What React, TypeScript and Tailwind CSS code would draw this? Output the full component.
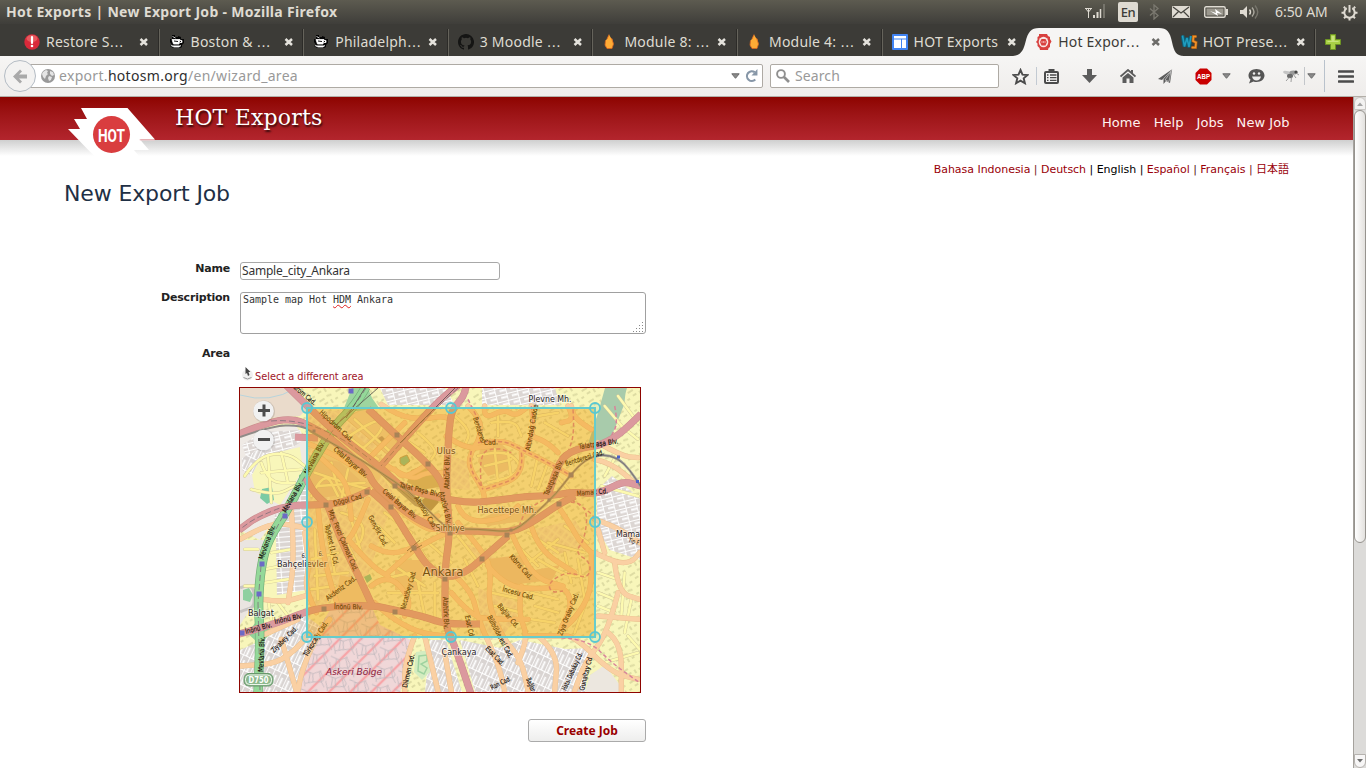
import React from "react";

const ui = "font-['Noto_Sans','Open_Sans',sans-serif]";
const dj = "font-['DejaVu_Sans','Noto_Sans_CJK_JP',sans-serif]";

/* ---------- window title bar ---------- */

function TitleBar() {
  return (
    <div className={`flex h-6 items-center bg-linear-to-b from-[#5d5b50] to-[#3f3e3a] text-[#dfdbd2] ${ui}`}>
      <div className="w-[1085px] pl-[6px] text-[14px] font-bold leading-6 tracking-[0.31px] whitespace-nowrap">
        Hot Exports | New Export Job - Mozilla Firefox
      </div>
      <svg width="20" height="16" viewBox="0 0 20 16" fill="none" stroke="#dfdbd2">
        <path d="M0 4.500h7M1 5l2.500 3L6 5M3.500 4v10" />
        <path d="M9 11v3M12.500 8v6" strokeWidth="2" />
        <path d="M15.500 5v9" strokeWidth="1.500" />
        <path d="M19 0v14" strokeWidth="2" stroke="#77756c" />
      </svg>
      <div className="ml-[13px] h-5 w-5 rounded-[2px] bg-[#dfdbd2] text-center text-[13px] font-medium leading-[20px] tracking-[-0.5px] text-[#3c3b37]">
        En
      </div>
      <svg className="ml-[11px]" width="10" height="16" viewBox="0 0 10 16" fill="none" stroke="#7b7970" strokeWidth="1.3">
        <path d="M1 4.500l8 7L5 15V1l4 3.500-8 7" />
      </svg>
      <svg className="ml-[13px]" width="18" height="12" viewBox="0 0 18 12">
        <rect width="18" height="12" rx="1" fill="#dfdbd2" />
        <path d="M1 1l8 6 8-6M1 11l5.500-5.500M17 11l-5.500-5.500" fill="none" stroke="#45443e" strokeWidth="1.200" />
      </svg>
      <svg className="ml-[14px]" width="24" height="12" viewBox="0 0 24 12">
        <rect x=".7" y=".7" width="20.500" height="10.600" rx="1.500" fill="none" stroke="#dfdbd2" strokeWidth="1.400" />
        <rect x="2.500" y="2.500" width="17" height="7" fill="#9b988e" />
        <path d="M22 3h2v6h-2z" fill="#dfdbd2" />
        <path d="M6 5l6 2-1-4 7 5-5-1 1 3z" fill="#fff" />
      </svg>
      <svg className="ml-[11px]" width="22" height="16" viewBox="0 0 22 16" fill="none" stroke="#dfdbd2" strokeWidth="1.400">
        <path d="M1 6h3l4-4v12l-4-4H1z" fill="#dfdbd2" stroke="none" />
        <path d="M10.500 5.500q2 2.500 0 5" />
        <path d="M13 3.500q4 4.500 0 9" stroke="#aaa79d" />
        <path d="M16 1.500q5.500 6.500 0 13" stroke="#77756c" />
      </svg>
      <div className="ml-[14px] w-[66px] text-[14px] leading-6 tracking-[-0.05px] whitespace-nowrap">6:50 AM</div>
      <svg className="shrink-0" width="17" height="17" viewBox="0 0 17 17" fill="none" stroke="#dfdbd2">
        <path d="M5.700 4.200a5.200 5.200 0 1 0 5.600 0" strokeWidth="2" />
        <path d="M8.500 1v7.500" strokeWidth="2" />
        <path d="M4.200 4.200L2.800 2.800M12.800 4.200l1.400-1.400M3 8.800H.5M14 8.800h2.500M4.500 12.700L3 14.200M12.500 12.700L14 14.200M8.500 14v2.500" strokeWidth="2" />
      </svg>
    </div>
  );
}

/* ---------- tabs ---------- */

const Alert = () => (
  <svg width="16" height="16" viewBox="0 0 16 16">
    <circle cx="8" cy="8" r="7.700" fill="#d9293a" />
    <ellipse cx="8" cy="4.500" rx="5.500" ry="3.500" fill="#ee7a76" opacity=".6" />
    <path d="M8 3v6" stroke="#fff" strokeWidth="2.200" strokeLinecap="round" />
    <circle cx="8" cy="12" r="1.300" fill="#fff" />
  </svg>
);
const Cup = () => (
  <svg width="16" height="16" viewBox="0 0 16 16">
    <path d="M3 1h3v2h3V2l3 1v2h3v4l-2 2v2l-2 1H4l-3-2 2-1-2-3V5h2z" fill="#050505" />
    <path d="M3.500 2.500l3 1.500M3 5.500h8l-1 4.500H4.500zM11 6.500h2v2h-2M2 11.500l3 1.500h5l2-1.500" fill="#fff" stroke="#fff" strokeWidth=".8" />
    <path d="M5 7l4 .5M11 7.500h1" stroke="#111" />
  </svg>
);
const Github = () => (
  <svg width="16" height="16" viewBox="0 0 16 16">
    <path
      fill="#151514"
      d="M8 0C3.580 0 0 3.580 0 8c0 3.540 2.290 6.530 5.470 7.590.4.070.55-.17.55-.38 0-.19-.01-.82-.01-1.490-2.010.37-2.530-.49-2.690-.94-.09-.23-.48-.94-.82-1.130-.28-.15-.68-.52-.01-.53.63-.01 1.080.58 1.230.82.72 1.210 1.870.87 2.330.66.07-.52.28-.87.51-1.070-1.780-.2-3.640-.89-3.640-3.950 0-.87.31-1.590.82-2.150-.08-.2-.36-1.020.08-2.120 0 0 .67-.21 2.200.82a7.600 7.600 0 0 1 4 0c1.530-1.040 2.200-.82 2.200-.82.44 1.100.16 1.920.08 2.120.51.56.82 1.270.82 2.150 0 3.070-1.870 3.750-3.650 3.950.29.25.54.73.54 1.480 0 1.070-.01 1.930-.01 2.200 0 .21.15.46.55.38A8 8 0 0 0 8 0z"
    />
  </svg>
);
const Flame = () => (
  <svg width="16" height="16" viewBox="0 0 16 16">
    <path d="M7 .5L9 4l1.500 1.500L11.500 10 10 14.500H5L3 11.500l.5-5L5 5z" fill="#ffab35" />
    <path d="M7 .5L5 5M3.500 6.500L3 11l2 3.500h5l1.500-4.500L9.500 4" fill="none" stroke="#d9661f" strokeWidth=".8" />
  </svg>
);
const Site = () => (
  <svg width="16" height="16" viewBox="0 0 16 16">
    <rect width="16" height="16" rx="1" fill="#4184f3" />
    <path d="M2 2h12v2.500H2zM2 5.500h7V14H2zM10 5.500h4V14h-4z" fill="#fff" />
  </svg>
);
const HotIcon = () => (
  <svg width="16" height="16" viewBox="0 0 16 16">
    <path d="M3 0H11l1 2 2 1v2l1.500 2.500L14 10v3l-1.500 1-.5 2H4l-.5-2L1.500 12V9.500L0 8l1.500-2V3L3 2z" fill="#d8403f" />
    <ellipse cx="7.500" cy="8" rx="4.800" ry="5.300" fill="#f8e5e3" />
    <path d="M5.500 5h4l1.500 3-1.500 3.500h-4L4 8z" fill="#d8403f" />
    <path d="M6 7v2M7.500 7v2M9 7v2" stroke="#f8c9c6" strokeWidth=".7" />
  </svg>
);
const Ws = () => (
  <svg width="17" height="16" viewBox="0 0 17 16" fill="none">
    <path d="M1.500 1.500l2 11L6 4l2 9 2-11" stroke="#0e5f77" strokeWidth="3.800" />
    <path d="M1.500 1.500l2 11L6 4l2 9 2-11" stroke="#1f9dbf" strokeWidth="1.600" />
    <path d="M15.500 2.500H12.500L12 7l3 1.500-.5 5h-4" stroke="#a35d14" strokeWidth="3" />
    <path d="M15.500 2.500H12.500L12 7l3 1.500-.5 5h-4" stroke="#f3922b" strokeWidth="1.600" />
  </svg>
);

const tabs: { icon: React.FC; label: string; active?: boolean; line?: boolean }[] = [
  { icon: Alert, label: "Restore S…", line: true },
  { icon: Cup, label: "Boston & …", line: true },
  { icon: Cup, label: "Philadelph…", line: true },
  { icon: Github, label: "3 Moodle …", line: true },
  { icon: Flame, label: "Module 8: …", line: true },
  { icon: Flame, label: "Module 4: …", line: true },
  { icon: Site, label: "HOT Exports" },
  { icon: HotIcon, label: "Hot Expor…", active: true },
  { icon: Ws, label: "HOT Prese…", line: true },
];

function TabStrip() {
  return (
    <div className={`flex h-8 bg-[#3c3b37] pl-[15px] ${ui}`}>
      {tabs.map((t, i) => (
        <div key={i} className="relative flex w-[144.6px] shrink-0 items-center pt-[3px]">
          {t.active && (
            <svg className="absolute -left-[14px] top-[4px]" width="172" height="28" viewBox="0 0 172 28">
              <path d="M0 28C8 27.500 10.500 22 12.500 14C15 4 18 0 26 0H146C154 0 157 4 159 14C161 23 163 28 171 28z" fill="#f6f5f4" />
            </svg>
          )}
          <div className="relative flex w-[31px] justify-start pl-[9px]"><t.icon /></div>
          <div className={`relative w-[92px] text-[14px] leading-5 tracking-[0.22px] whitespace-nowrap ${t.active ? "text-[#3c3b37]" : "text-[#dfdbd2]"}`}>
            {t.label.replace("…", "")}
            {t.label.endsWith("…") && <span className="font-['DejaVu_Sans']">…</span>}
          </div>
          <svg className="relative ml-[1px]" width="10" height="8" viewBox="0 0 10 8">
            <path d="M1.500 1l6.500 6M8 1l-6.500 6" stroke={t.active ? "#6d6c69" : "#e4e2dc"} strokeWidth="2.500" />
          </svg>
          {t.line && <div className="absolute right-0 top-[5px] h-[27px] w-[2px] border-l border-[#2c2b28] bg-[#65635b]" />}
        </div>
      ))}
      <svg className="mt-[10px] ml-[9px]" width="16" height="16" viewBox="0 0 16 16">
        <path d="M5.500.5h5v5h5v5h-5v5h-5v-5h-5v-5h5z" fill="#a9d046" stroke="#6d9422" />
        <path d="M6.500 2h3v5h4v1h-11V7h4z" fill="#c9e47c" />
      </svg>
    </div>
  );
}

/* ---------- navigation toolbar ---------- */

const Caret = () => (
  <svg width="9" height="6" viewBox="0 0 9 6"><path d="M.8.8h7.400L4.500 5.300z" fill="#8a8a8a" stroke="#6a6a6a" /></svg>
);

function Cell({ w, children }: { w: string; children?: React.ReactNode }) {
  return <div className={`flex h-6 shrink-0 items-center justify-center ${w}`}>{children}</div>;
}

function Toolbar() {
  return (
    <div className={`flex h-[41px] items-center border-b border-[#b3afa8] bg-linear-to-b from-[#f6f5f4] to-[#efedeb] ${ui}`}>
      <div className="relative z-10 ml-[4px] flex h-8 w-8 shrink-0 items-center justify-center rounded-full border border-[#b4bcc4] bg-[#f3f2f1]">
        <svg width="14" height="15" viewBox="0 0 14 15"><path d="M0 7.500L7 .5l2 2L6 5.500h8v4H6l3 3-2 2z" fill="#a9a9a9" /></svg>
      </div>
      <div className="-ml-[6px] flex h-6 w-[733px] shrink-0 items-center rounded-r-[2px] border border-[#aeaaa4] bg-white pl-[10px]">
        <svg width="14" height="14" viewBox="0 0 14 14">
          <circle cx="7" cy="7" r="7" fill="#999" />
          <path d="M2 3l3-2 2 1-1 2 1 1-2 2-1 3-2-2-1-3zM9 2l3 1 1 3-2 1-2-2zM8 7l3 1-1 3-2 1-1-3z" fill="#e4e4e4" />
        </svg>
        <div className="ml-[4px] w-[672px] text-[14px] leading-5 tracking-[0.31px] whitespace-nowrap text-[#999]">
          export.<span className="text-[#2e2e2e]">hotosm.org</span>/en/wizard_area
        </div>
        <Caret />
        <svg className="ml-[5px]" width="13" height="14" viewBox="0 0 12 13">
          <path d="M9.500 9.800A4.500 4.500 0 1 1 9 3" fill="none" stroke="#8797a8" strokeWidth="2" />
          <path d="M11.500 0v6H6z" fill="#8797a8" />
        </svg>
      </div>
      <div className="ml-[7px] flex h-6 w-[229px] shrink-0 items-center rounded-[2px] border border-[#aeaaa4] bg-white pl-[5px]">
        <svg width="14" height="14" viewBox="0 0 14 14" fill="none" stroke="#8f8f8f"><circle cx="5" cy="5" r="3.900" strokeWidth="1.900" /><path d="M8 8l5 5" strokeWidth="2.600" /></svg>
        <div className="ml-[5px] text-[14px] leading-5 tracking-[0.1px] text-[#999]">Search</div>
      </div>
      <Cell w="w-[43px]">
        <svg width="17" height="17" viewBox="0 0 17 17"><path d="M8.500 2l2 4.600 5 .5-3.800 3.200 1.200 4.900-4.400-2.600-4.400 2.600 1.200-4.900L1.500 7.100l5-.5z" fill="none" stroke="#4b4b4b" strokeWidth="1.900" /></svg>
      </Cell>
      <div className="-ml-[6px] mr-[5px] h-[18px] w-px shrink-0 bg-[#c3cad2]" />
      <Cell w="w-[19px]">
        <svg width="15" height="15" viewBox="0 0 15 15">
          <rect x="1" y="3" width="13" height="11" rx="1" fill="#f3f2f1" stroke="#4b4b4b" strokeWidth="2" />
          <path d="M4.500 0h6v4h-6z" fill="#4b4b4b" />
          <path d="M3 6h1.500M6 6h6.500M3 8.700h1.500M6 8.700h6.500M3 11.400h1.500M6 11.400h6.500" stroke="#4b4b4b" strokeWidth="1.300" />
        </svg>
      </Cell>
      <Cell w="w-[57px]"><svg width="15" height="14" viewBox="0 0 15 14"><path d="M5 0h5v6h5l-7.500 8L0 6h5z" fill="#5c5c5c" /></svg></Cell>
      <Cell w="w-[19px]">
        <svg width="16" height="14" viewBox="0 0 16 14"><path d="M.5 7.500L8 1l7.500 6.500" fill="none" stroke="#5c5c5c" strokeWidth="1.800" /><path d="M11 1h2v4h-2zM2.500 8.500L8 4l5.500 4.500V14H9.500V9.500h-3V14h-4z" fill="#5c5c5c" /></svg>
      </Cell>
      <Cell w="w-[57px]">
        <svg width="15" height="15" viewBox="0 0 15 15"><path d="M14.500 0L0 10l4 1zM14 1L5.500 10v5l2.500-3 4 2z" fill="#5c5c5c" /><path d="M13 2.500l-6 8.500 4 1.500z" fill="none" stroke="#ddd" strokeWidth=".6" /></svg>
      </Cell>
      <Cell w="w-[19px]">
        <svg width="17" height="17" viewBox="0 0 17 17"><path d="M5 .5h7l4.500 4.500v7L12 16.500H5L.5 12V5z" fill="#c90000" /><text x="2" y="11.300" fontSize="7.500" fontWeight="700" fill="#fff" fontFamily="Liberation Sans" textLength="13" lengthAdjust="spacingAndGlyphs">ABP</text></svg>
      </Cell>
      <Cell w="w-[27px]"><Caret /></Cell>
      <Cell w="w-[33px]">
        <svg width="17" height="15" viewBox="0 0 17 15"><path d="M8.500 0C13 0 16.500 2.800 16.500 6.500S13 13 8.500 13c-1 0-2-.1-3-.5L1 14.500l1.500-4C1 9.500.5 8 .5 6.500.5 2.800 4 0 8.500 0z" fill="#555" /><path d="M4 7.500h9q-1 4-4.500 4T4 7.500z" fill="#eee" /><circle cx="6" cy="4.500" r="1.200" fill="#eee" /><circle cx="11" cy="4.500" r="1.200" fill="#eee" /></svg>
      </Cell>
      <Cell w="w-[37px]">
        <svg width="17" height="14" viewBox="0 0 17 14"><ellipse cx="5" cy="4" rx="5" ry="1.700" fill="#c4c4c4" transform="rotate(15 5 4)" /><ellipse cx="10.500" cy="3.500" rx="4" ry="2" fill="#999" /><ellipse cx="7" cy="7" rx="3" ry="2.200" fill="#6a6a6a" /><circle cx="13" cy="3" r="1.600" fill="#444" /><path d="M3 12l3.500-4M8 13l.5-5M13 9l-3-4M16 6l-3-2" stroke="#888" strokeWidth=".8" /></svg>
      </Cell>
      <div className="-ml-[6px] h-[18px] w-px shrink-0 bg-[#c3c6ca]" />
      <Cell w="w-[13px]"><Caret /></Cell>
      <div className="ml-[6px] h-8 w-px shrink-0 bg-[#b9c2cc]" />
      <Cell w="w-[42px]"><svg width="16" height="13" viewBox="0 0 16 13"><path d="M1 1.500h14M1 6.500h14M1 11.500h14" stroke="#4b4b4b" strokeWidth="2.600" strokeLinecap="round" /></svg></Cell>
    </div>
  );
}

/* ---------- map ---------- */

/* Turns "x y x y ..." polylines (separated by M) into curves through the segment midpoints. */
function smooth(d: string): string {
  return d
    .split("M")
    .filter((s) => s.trim())
    .map((s) => {
      const n = (s.match(/-?\d+(\.\d+)?/g) || []).map(Number);
      let out = `M${n[0]} ${n[1]}`;
      for (let i = 2; i < n.length - 2; i += 2) {
        out += `Q${n[i]} ${n[i + 1]} ${(n[i] + n[i + 2]) / 2} ${(n[i + 1] + n[i + 3]) / 2}`;
      }
      return `${out}L${n[n.length - 2]} ${n[n.length - 1]}`;
    })
    .join("");
}

const trunk = ["M366 387L355 406 336 424 318 453 306 474 288 509 268 540 261 566 258 603 260 628 259 671 258 693"];
const primary = [
  "M285 384L310 409 341 437 371 460 388 474 400 486 420 493 440 498 470 503 500 500 528 496 551 496 572 492 598 494 618 484 626 482 641 486",
  "M239 434L271 421 295 419 310 426 328 436 345 451 368 471 373 484 395 503 415 519 443 531 478 531 508 533 530 524 559 504 575 496",
  "M460 384L443 396 412 430 381 466",
  "M368 409L397 436 428 464 443 483 445 500",
  "M466 387L464 397 452 409 449 429 448 450 446 486 450 533 446 560 445 578 445 625 453 641 471 694",
  "M371 490L348 501 326 505 288 505 258 516 239 530",
  "M306 478L312 491 326 504M328 506L341 541 361 581 372 605",
  "M371 491L391 508 402 526 415 547 427 566 445 578 465 573 483 558 508 536",
  "M239 634L275 624 305 612 325 607 371 605 395 610 425 617 445 624 480 624",
  "M548 496L555 472 565 454 585 447 598 446 618 436 641 414",
  "M295 437L318 438",
];
/* drawn in a three-times-enlarged coordinate space */
const secondary = [
  "M430 55L480 90 560 100 610 90 640 100M230 200L290 250 330 300 340 400M400 210L500 110M215 175L280 200 400 275",
  "M560 240L500 280 470 250M440 235L520 285 560 260 610 260",
  "M690 60L730 100 725 160 700 195 690 240 735 310 740 340",
  "M720 170L790 160 850 190 950 240 1000 270M850 200L860 270 740 310",
  "M880 60L890 130 865 190M990 60L1010 100 970 110M960 200L930 170 880 150",
  "M1060 130L1010 100 1000 60M1070 220L1120 230 1200 300M1080 170L1150 210 1200 215",
  "M740 60L735 100 800 70 830 90 860 70M625 150L680 190 760 180",
  "M750 540L800 600 900 610 975 600 1000 640 990 690 960 740 1010 700 1060 620 1060 500",
  "M660 410L740 500 760 560 750 650 790 750 850 820 870 915",
  "M640 560L700 610 720 700 780 830 800 915M640 620L700 690 760 700 870 700",
  "M820 440L850 510 900 580 975 600M960 360L1000 420 1020 460 1060 500M880 420L900 490 1010 560",
  "M850 600L840 680 870 750 840 830M900 750L960 800 950 915M870 750L960 750 1010 750 1120 860 1200 880",
  "M1070 500L1130 530 1180 530 1205 500M1070 400L1130 420 1205 470M1080 430L1100 500",
  "M1130 530L1140 620 1205 640M1140 620L1110 740 1040 830 1010 915M1110 740L1150 770 1150 915M1080 690L1205 700",
  "M530 490L600 450 640 440M450 560L530 490M400 600L450 560 520 640 500 690M400 480L450 510 540 480",
  "M275 700L230 760 190 860 180 915M215 740L150 830 6 840M130 760L175 915M70 750L180 700",
  "M200 440L215 540 200 600 235 680M240 360L250 480 280 600 300 660M330 460L400 540 450 570",
  "M410 650L450 690 540 740 620 750M530 750L500 830 500 915M560 750L600 915M620 800L640 915",
  "M75 640L130 650 200 630M160 370L170 520 150 650M6 460L60 430 120 410 200 425",
  "M390 340L350 440 320 470M480 370L560 430 600 430M560 400L600 390M660 360L680 410 800 400 840 360",
];
const minor = [
  "M20 270L60 210 150 200 200 240M70 230L90 290 170 290M40 310L110 330 170 300M90 210L100 350M130 200L150 290M70 260L190 250",
  "M230 260L350 300 400 310M220 330L260 250 300 330M280 230L300 330 360 330M330 250L310 340M240 300L380 290",
  "M320 160L420 90 440 130 360 200M350 100L460 200M300 130L420 220M540 140L600 190 580 220M500 160L560 200",
  "M310 380L380 400 370 480 320 470M290 400L350 520M330 370L370 500M420 420L470 470M440 380L520 440",
  "M230 430L240 640M265 420L290 560M220 520L300 500M230 570L330 560M220 610L290 600",
  "M720 210L790 190 850 230 830 270 750 290M740 240L820 220M770 190L780 290M810 200L820 280M900 210L880 300M930 230L900 310",
  "M650 90L700 130 680 180M760 110L830 100 850 150M780 150L780 90M900 90L960 80M920 110L990 150M940 250L1000 320",
  "M660 450L730 540M680 520L720 600M540 480L600 570M560 460L640 530M470 540L560 600M430 580L520 560M450 620L600 620M540 590L560 690M590 590L590 710",
  "M830 470L900 540M870 440L960 500M930 470L1040 500M900 520L980 570 1040 570M860 540L960 460M980 420L1050 470",
  "M760 620L850 640M770 660L850 680M880 620L960 640M890 660L960 680M880 700L950 710M980 500L1000 590M1020 520L1040 640M1040 660L1010 740",
  "M1090 300L1200 330M1100 270L1140 200M1100 60L1160 130M1150 120L1200 160M1140 30L1200 110",
  "M1080 560L1140 580M1080 620L1130 640M1160 560L1150 690M1180 640L1160 740M1080 660L1130 680M1170 750L1205 790M1100 830L1200 800",
  "M20 600L60 600M80 550L130 540M80 590L150 580M100 500L160 490M20 490L60 490M90 640L100 700M120 650L150 690",
];
const labels: [string, number, number, number, number][] = [
  ["Hipodrom Cad.", 319, 413, 43, 43],
  ["drom Cad.", 293, 388, 40, 27],
  ["Celal Bayar Blv.", 333, 450, 41, 43],
  ["Celal Bayar Blv.", 382, 492, 40, 43],
  ["Talat Paşa Blv.", 399, 487, 14, 42],
  ["Altınsoy Cad.", 414, 498, 58, 37],
  ["Dögol Cad.", 334, 506, -15, 31],
  ["Mevlana Blv.", 308, 475, -62, 36],
  ["Mevlana Blv.", 286, 513, -60, 34],
  ["Mevlana Blv.", 263, 560, -70, 36],
  ["Mevlana Blv.", 263, 672, -87, 35],
  ["Mrş. Fevzi Çakmak Cad.", 328, 511, 67, 66],
  ["Taşkent (1.) Cd.", 325, 525, 78, 42],
  ["Gençlik Cad.", 368, 517, 62, 34],
  ["Akdeniz Cad.", 328, 601, -37, 36],
  ["İnönü Blv.", 334, 609, 1, 29],
  ["İnönü Blv.", 275, 624, -12, 29],
  ["İnönü Blv.", 246, 634, -15, 27],
  ["Necatibey Cad.", 405, 610, -74, 40],
  ["Bentderesi", 473, 418, 72, 27],
  ["Cad.", 484, 445, -2, 14],
  ["Altındağ Cadde", 530, 451, -80, 47],
  ["Atatürk Blv.", 449, 489, -89, 34],
  ["Atatürk Blv.", 439, 492, 76, 34],
  ["Talatpaşa Blv.", 579, 449, -8, 40],
  ["Talatpaşa Blv.", 548, 496, -66, 38],
  ["Bentderesi Cad.", 566, 466, -17, 40],
  ["Mamak Cd.", 577, 496, -5, 31],
  ["Kıbrıs Cad.", 509, 557, 48, 31],
  ["İncesu Cad.", 502, 591, 16, 33],
  ["Bağlar Cd.", 497, 606, 50, 29],
  ["Bülbülderesi Cad.", 487, 617, 62, 47],
  ["Esat Cd.", 465, 616, 78, 23],
  ["Esat Cad.", 485, 649, 46, 24],
  ["Atatürk Blv.", 443, 597, 88, 32],
  ["Ziya Oralay Cad.", 562, 636, -68, 45],
  ["Türkocağı Cad.", 307, 657, -58, 40],
  ["Ziyabey Cad.", 274, 653, -45, 34],
  ["Dikmen Cad.", 407, 688, -77, 34],
  ["Hatai Dabakay Cd.", 566, 691, -66, 41],
  ["Gunaltay Cd", 584, 691, -76, 34],
  ["Bağlar", 526, 679, 68, 14],
  ["Ran Cad.", 492, 690, -27, 22],
];
const squares: [number, number][] = [[397, 435], [428, 464], [326, 505], [367, 492], [391, 507], [395, 486], [571, 475], [559, 504], [450, 533], [507, 535], [482, 559], [445, 579], [414, 548], [324, 609], [395, 612]];
const smallSquares: [number, number][] = [[314, 431], [549, 500], [511, 530]];
const blues: [number, number][] = [[351, 391], [285, 516], [262, 564], [259, 594], [242, 633]];
const handles: [number, number][] = [[307, 408], [451, 408], [595, 408], [307, 522], [595, 522], [307, 637], [451, 637], [595, 637]];
const towns: [string, number, number, number, number][] = [
  ["Plevne Mh.", 550, 402, 43, 8.5], ["Ulus", 446, 454, 19, 8.5], ["Hacettepe Mh.", 507, 513, 59, 8.5],
  ["Sıhhiye", 450, 530.5, 29, 8.5], ["Ankara", 443, 575.5, 41, 12], ["Bahçelievler", 302, 566.5, 50, 8.5],
  ["Balgat", 261, 615.5, 26, 8.5], ["Çankaya", 459, 655, 35, 8.5], ["Mama", 628, 536.5, 24, 8.5], ["6.", 304, 558, 5, 6.5], ["6.", 321, 556, 5, 6.5],
];
const rail = "M310 431L350 453 380 472 410 492 430 512 447 529 478 529 508 532 520 527 535 514 557 493 571 474 585 460 601 454 618 458 630 470 641 487";
const railWest = "M240 437L271 426 300 425 312 432 328 442";

function AreaMap() {
  return (
    <svg width="400" height="304" viewBox="240 388 400 304" className="block" fill="none" fontFamily="DejaVu Sans">
      <defs>
        <pattern id="blk" width="11" height="7" patternUnits="userSpaceOnUse" patternTransform="rotate(-14)">
          <rect width="11" height="7" fill="#dcd6d3" /><path d="M0 0h11M0 0v7M5 3.500h6" stroke="#fff" strokeWidth="1.900" />
        </pattern>
        <pattern id="blk2" width="7" height="14" patternUnits="userSpaceOnUse" patternTransform="rotate(25)">
          <rect width="7" height="14" fill="#d9d4d2" /><path d="M0 0h7M0 0v14M3.500 5v9" stroke="#fff" strokeWidth="1.800" />
        </pattern>
        <pattern id="blk3" width="12" height="5" patternUnits="userSpaceOnUse" patternTransform="rotate(-4)">
          <rect width="12" height="5" fill="#dbd5d2" /><path d="M0 0h12M0 0v5" stroke="#fff" strokeWidth="2.200" />
        </pattern>
        <pattern id="yel" width="19" height="13" patternUnits="userSpaceOnUse" patternTransform="rotate(-32)">
          <path d="M1 3h6M10 2l5 1M4 8h4M12 7v4M16 9h3" stroke="#dedca3" strokeWidth="2" />
        </pattern>
        <pattern id="dens" width="12" height="8" patternUnits="userSpaceOnUse" patternTransform="rotate(36)">
          <rect width="12" height="8" fill="#eedfb8" /><path d="M0 1h12M2 0v8M7 1v7" stroke="#f8efbc" strokeWidth="1.500" /><path d="M4 4h2M9 5h2" stroke="#dccdaa" />
        </pattern>
        <pattern id="mil" width="15" height="15" patternUnits="userSpaceOnUse" patternTransform="rotate(45)">
          <rect width="15" height="15" fill="#f0d7d8" /><path d="M2 0v15" stroke="#f7a5a8" strokeWidth="2.400" />
        </pattern>
        <pattern id="lots" width="23" height="19" patternUnits="userSpaceOnUse" patternTransform="rotate(12)">
          <path d="M0 3l9 2 2 8-8 3-3-7M11 13l8-2 4 5M9 5l7-4 5 7-2 4M3 16l1 3M16 1V0M6 4l1 11M19 11l-4-9" stroke="#bfb6bb" strokeWidth=".8" />
        </pattern>
      </defs>
      <path d="M240 388h400v304H240z" fill="#f8f6ba" />
      <path d="M240 388h400v304H240z" fill="url(#yel)" />
      <path d="M240 388H288L308 408 300 416 271 418 240 430z" fill="#eadbcb" />
      <path d="M240 395Q270 404 296 388" stroke="#b8d4dc" />
      <path d="M240 432L295 425 307 440 306 474 260 540 240 530z" fill="#efeae5" />
      <path d="M262 432L300 430 304 440 280 455 248 462 242 445z" fill="url(#blk)" />
      <path d="M242 458L262 448 272 462 250 475 242 470z" fill="url(#blk2)" />
      <path d="M275 515L306 485V605H275L268 555z" fill="url(#blk3)" />
      <path d="M277 595L306 590V605H264V600z" fill="#f8f6ba" />
      <path d="M260 542L276 538 277 600 262 602z" fill="#f8f6ba" />
      <path d="M240 540L266 540 256 600 240 625z" fill="#eae5e1" />
      <path d="M240 588c8-4 14-2 14 6v8c0 8-8 6-14 10" stroke="#c9c5c3" strokeWidth="3" />
      <path d="M243 590l6-2 4 7-3 7-7-2z" fill="#8fd0a0" />
      <path d="M262 640L305 615 325 630 302 692H240V650z" fill="url(#blk2)" />
      <path d="M262 456L300 447 303 470 280 505 255 492 252 475z" fill="#f8f6ba" />
      <path d="M308 412L350 410 390 440 370 460 395 495 368 575 325 605 307 605z" fill="url(#dens)" />
      <path d="M320 440L350 430 390 465 370 490 330 500z" fill="#eeddab" />
      <path d="M345 418L365 408 400 445 388 455z" fill="#efd9a8" stroke="#e3c795" />
      <path d="M378 438l4-2 4 4-4 4z" fill="#b39c7c" />
      <path d="M309 455L340 462 360 480 345 494 322 498 309 480z" fill="#e8cfa6" />
      <path d="M455 538L500 560 480 560zM478 588L525 605 500 640 480 640z" fill="url(#dens)" />
      <path d="M448 455L468 462 470 490 448 488zM530 530L575 520 590 545 555 555z" fill="url(#dens)" />
      <path d="M480 448L500 443 514 455 508 470 488 476 478 462zM500 510L545 506 530 520 488 526 478 520z" fill="#ecd2a4" />
      <path d="M480 560L520 555 535 570 560 565 552 580 510 585z" fill="#eccb9f" />
      <path d="M597 490L612 476 630 490 641 500V560L610 550 597 530z" fill="url(#blk)" />
      <path d="M380 388H445L455 405H388zM482 388H555L560 405H482z" fill="url(#blk)" />
      <path d="M430 640H446L462 692H425zM460 640L500 648 520 640 570 650 545 692H475z" fill="url(#blk2)" />
      <path d="M545 650L590 648 585 692H545z" fill="url(#blk2)" />
      <path d="M590 675L605 665 625 692H585z" fill="#ece7df" />
      <path d="M340 575L362 580 369 602 335 603zM395 560L425 560 420 590 395 590z" fill="#efd3a2" />
      <path d="M332 607L372 608 380 625 411 640 410 657 400 693H299L311 640z" fill="url(#mil)" />
      <path d="M332 607L372 608 380 625 411 640 410 657 400 693H299L311 640z" fill="url(#lots)" />
      <path d="M605 388H627C624 396 626 402 622 410L610 440 588 444 598 413z" fill="#a8cbab" />
      <path d="M262 489L272 487 274 500 267 504 260 498z" fill="#7bcba3" />
      <path d="M416 652L430 650V672L422 680 414 672z" fill="#d4ecc0" />
      <path d="M419 656l8-1v6l-6 3 6 4-3 6-6-3z" stroke="#9fd3a0" strokeWidth="1.500" />
      <path d="M400 458l7-3 3 6-6 5-4-3z" fill="#7fc794" stroke="#b5a467" />
      <path d="M411 470l14-5 12 8 2 14-18 3-14-8z" fill="#cdbb82" />
      <path d="M422 500l8-6 9 8-8 9-8-5z" fill="#a6976b" />
      <path d="M364 577l6-3 2 5-5 4z" fill="#7fc794" />
      <path d="M352 388H368L372 398 379 408 350 412 337 424 344 408z" fill="#9ed59f" />
      <path d="M299 475l6-2v14l-6-6z" fill="#7fc794" />
      <path d="M247 633L256 622 262 621 272 632 262 642 256 641z" fill="#92d39a" />

      <g transform="translate(238 386) scale(.33333)" strokeLinejoin="round" strokeLinecap="round">
        {minor.map((d, i) => <path key={i} d={smooth(d)} stroke="#cfc69b" strokeWidth="10" />)}
        {minor.map((d, i) => <path key={i} d={smooth(d)} stroke="#fdfab0" strokeWidth="7.500" />)}
        {secondary.map((d, i) => <path key={i} d={smooth(d)} stroke="#eabf8d" strokeWidth="16" />)}
        {secondary.map((d, i) => <path key={i} d={smooth(d)} stroke="#fad0a3" strokeWidth="13.500" />)}
        <path d={smooth("M720 170L790 160 850 190 950 240 1000 270M850 200L860 270 740 310M700 195L690 240 735 310M730 300L720 200 780 185 820 200M880 60L890 130 865 190M1005 70L1010 140 990 200M960 360L1000 340 1050 370 1040 460 1010 500 1060 530 1050 580 990 555 930 590 940 620 975 615M970 755L1050 760 1120 830 1205 890M1130 60L1140 110 1120 150M1000 340L1060 380 1070 400M840 440L850 380 920 340M690 40L720 100")} stroke="#d8849a" strokeWidth="4.500" strokeDasharray="12 8" strokeLinecap="butt" />
      </g>
      <path d="M368 462L385 470 410 492 428 510 415 506 395 488z" fill="#aaa084" />
      <path d="M372 466L415 502M378 468L420 503M384 472L424 506" stroke="#827b66" strokeWidth=".7" />
      {trunk.map((d, i) => <path key={i} d={smooth(d)} stroke="#70aa75" strokeWidth="9.400" />)}
      {trunk.map((d, i) => <path key={i} d={smooth(d)} stroke="#94d899" strokeWidth="8.200" />)}
      {primary.map((d, i) => <path key={i} d={smooth(d)} stroke="#c98c8e" strokeWidth="7.200" />)}
      {primary.map((d, i) => <path key={i} d={smooth(d)} stroke="#db999e" strokeWidth="6.200" />)}
      <path d={smooth(rail)} stroke="#a09c98" strokeWidth="2.400" />
      <path d={smooth(rail)} stroke="#6d6a68" strokeWidth=".8" />
      <path d={smooth(railWest)} stroke="#8f8b88" strokeWidth="2" />
      <path d="M617 455.500h3v3h-3zM636 480h3v3h-3z" fill="#4c62c8" />
      <path d={smooth("M366 388L355 406 336 424 306 474 270 540M271 421L295 419 341 437 371 460M288 505L258 516 239 530M458 388L412 430 381 466M258 603L260 690M261 566L258 603")} stroke="#7d6e78" strokeWidth=".8" strokeDasharray="6 3" />
      <path d="M365 388L346 418M378 388L337 424M455 388L400 443M407 551L420 540M410 552L422 545" stroke="#57514c" strokeWidth=".8" />
      {blues.map(([x, y], i) => <rect key={i} x={x - 2.5} y={y - 2.5} width="5" height="5" fill="#6d6ac6" />)}
      {squares.map(([x, y], i) => <rect key={i} x={x - 2.5} y={y - 2.5} width="5" height="5" fill="#7a7590" />)}
      {smallSquares.map(([x, y], i) => <rect key={i} x={x - 1.5} y={y - 1.5} width="3" height="3" fill="#7a7590" />)}
      {labels.map(([t, x, y, a, w], i) => (
        <text key={i} x={x} y={y} transform={`rotate(${a} ${x} ${y})`} fontSize="7" fill="#120c08" stroke="#120c08" strokeWidth=".15" textLength={w} lengthAdjust="spacingAndGlyphs">{t}</text>
      ))}
      {towns.map(([t, x, y, w, s], i) => (
        <text key={i} x={x - w / 2} y={y} fontSize={s} textLength={w} lengthAdjust="spacingAndGlyphs" fill="#28221e" stroke="#fff" strokeOpacity=".6" strokeWidth="1.600" paintOrder="stroke">{t}</text>
      ))}
      <text x="628" y="542" fontSize="6.500" fill="#222" transform="rotate(17 628 542)" textLength="11" lengthAdjust="spacingAndGlyphs">Tip F</text>
      <text x="326" y="674.500" fontSize="9" fontStyle="italic" fill="#8f1b3c" textLength="56" lengthAdjust="spacingAndGlyphs">Askeri Bölge</text>
      <rect x="244" y="673.500" width="29" height="12.500" rx="5" fill="#8db98d" stroke="#68976c" />
      <rect x="245.500" y="675" width="26" height="9.500" rx="4" stroke="#f0f7ee" />
      <text x="248.500" y="683" fontSize="8" fontWeight="700" fill="#fff" textLength="20" lengthAdjust="spacingAndGlyphs">D750</text>

      <path d="M307 408h288v229H307z" fill="#ee9900" fillOpacity=".4" stroke="#66cccc" strokeWidth="2" />
      {handles.map(([x, y], i) => <circle key={i} cx={x} cy={y} r="5" stroke="#58c8d2" strokeWidth="1.800" fill="#66cccc" fillOpacity=".15" />)}
      {[411, 440].map((y) => (
        <g key={y}>
          <circle cx="264" cy={y + 0.5} r="11" fill="#000" opacity=".12" />
          <circle cx="263.500" cy={y} r="10.300" fill="#f1f1f1" />
          <path d={y === 411 ? "M258 410.500h12M264 404.500v12" : "M258 439.500h12"} stroke="#4c4c4c" strokeWidth="3" />
        </g>
      ))}
    </svg>
  );
}

/* ---------- page ---------- */

function Header() {
  return (
    <div>
      <div className="flex h-[43px] items-start bg-linear-to-b from-[#8e0400] to-[#b3252d]">
        <svg className="relative z-10 ml-[66px] mt-[10px] shrink-0" width="92" height="50" viewBox="66 107 92 50">
          <path d="M81 108H127.500L155 139.500H140L149 150H134L140 157H95L68 129H80L74 119H87z" fill="#fff" />
          <path d="M139 139.500h15l1 1h-15z" fill="#f5ccd0" />
          <circle cx="111.500" cy="134.500" r="18.500" fill="#d93d3f" />
          <text x="98" y="141.500" fontFamily="Roboto" fontSize="19" fontWeight="700" fill="#fff" textLength="27" lengthAdjust="spacingAndGlyphs">HOT</text>
        </svg>
        <div className="ml-[17px] mt-[8px] w-[927px] font-['DejaVu_Serif',serif] text-[22px] leading-[26px] tracking-[0.2px] whitespace-nowrap text-white [text-shadow:1px_2px_2px_rgba(0,0,0,0.7)]">HOT Exports</div>
        <div className={`mt-[17px] flex gap-[13px] text-[13px] leading-[18px] tracking-[0.06px] whitespace-nowrap text-[#fff2f0] ${dj}`}>
          <span>Home</span><span>Help</span><span>Jobs</span><span>New Job</span>
        </div>
      </div>
      <div className="h-4 bg-linear-to-b from-[#cfcfcf] to-white" />
    </div>
  );
}

function Scrollbar() {
  return (
    <div className="flex w-[13px] shrink-0 flex-col border-l border-[#a5a29d] bg-[#dcdbd9]">
      <div className="flex h-[13px] items-center justify-center rounded-t-full border border-[#c9c7c4] bg-[#f3f2f1]">
        <svg width="6" height="4" viewBox="0 0 6 4"><path d="M0 4l3-3.500L6 4z" fill="#a4a4a4" /></svg>
      </div>
      <div className="h-[433px] rounded-full border border-[#96938e] bg-linear-to-r from-white to-[#e3e1de]" />
      <div className="flex-1" />
      <div className="flex h-[14px] items-center justify-center rounded-b-full border border-[#b5b2ae] bg-[#f7f6f6]">
        <svg width="6" height="4" viewBox="0 0 6 4"><path d="M0 0l3 3.500L6 0z" fill="#6e6e6e" /></svg>
      </div>
    </div>
  );
}

export default function App() {
  return (
    <div className="flex h-[768px] w-[1366px] flex-col overflow-hidden bg-white">
      <TitleBar />
      <TabStrip />
      <Toolbar />
      <div className="flex min-h-0 flex-1">
        <div className={`w-[1353px] shrink-0 ${dj}`}>
          <Header />
          <div className="flex h-[25px] justify-end pt-[6px] pr-[64px] text-[11px] leading-4 tracking-[-0.03px] whitespace-nowrap">
            <div className="text-[#990008]">
              Bahasa Indonesia <span className="text-[#722]">|</span> Deutsch <span className="text-black">| English |</span> Español <span className="text-[#522]">|</span> Français <span className="text-[#722]">|</span> 日本語
            </div>
          </div>
          <h1 className="ml-[64px] text-[22px] leading-[26px] tracking-[-0.14px] text-[#1f3045]">New Export Job</h1>
          <div className="mt-[55px] grid grid-cols-[230px_1fr] gap-x-[10px] text-[11px] text-[#333]">
            <div className="text-right font-bold leading-[14px] tracking-[-0.2px] text-[#222]">Name</div>
            <div className="h-[30px]">
              <div className={`h-[18px] w-[260px] rounded-[3px] border border-[#a8a8a8] pl-[1px] text-[12px] leading-[16px] tracking-[-0.2px] whitespace-nowrap ${ui}`}>Sample_city_Ankara</div>
            </div>
            <div className="text-right font-bold leading-3 tracking-[-0.2px] text-[#222]">Description</div>
            <div className="flex h-[53px] items-start">
              <div className="flex h-[42px] w-[406px] justify-between rounded-[3px] border border-[#a0a0a0] pl-[2px] font-['DejaVu_Sans_Mono',monospace] text-[10px] leading-[14px] tracking-[-0.02px] whitespace-nowrap">
                <span>Sample map Hot <span className="underline decoration-[#e02020] decoration-wavy decoration-[1px] underline-offset-[1px]">HDM</span> Ankara</span>
                <svg className="self-end" width="12" height="12" viewBox="0 0 12 12"><path d="M0 10.500h11M3 7.500h8M6 4.500h5M9 1.500h2" stroke="#888" strokeDasharray="1 2" /></svg>
              </div>
            </div>
            <div className="text-right font-bold leading-[18px] tracking-[-0.2px] text-[#222]">Area</div>
            <div />
          </div>
          <div className="ml-[242px] mt-[3px] flex h-[21px] items-start">
            <svg width="13" height="16" viewBox="0 0 13 16"><circle cx="5.500" cy="9" r="5.500" fill="#f0f0f0" /><path d="M3.500 1v7l1.500-1 1 3 1.500-1-1-3h2z" fill="#444" /><path d="M1.500 11.500q4 3 8 0" stroke="#999" fill="none" /></svg>
            <span className="mt-[4px] text-[9.75px] leading-[14px] whitespace-nowrap text-[#a01428]">Select a different area</span>
          </div>
          <div className="ml-[239px] w-[402px] border border-[#8e0400]"><AreaMap /></div>
          <div className={`ml-[528px] mt-[26px] flex h-[23px] w-[118px] items-center justify-center rounded-[3px] border border-[#aaa] bg-linear-to-b from-white to-[#eeeeed] text-[12px] font-bold text-[#990000] ${ui}`}>
            Create Job
          </div>
        </div>
        <Scrollbar />
      </div>
    </div>
  );
}
